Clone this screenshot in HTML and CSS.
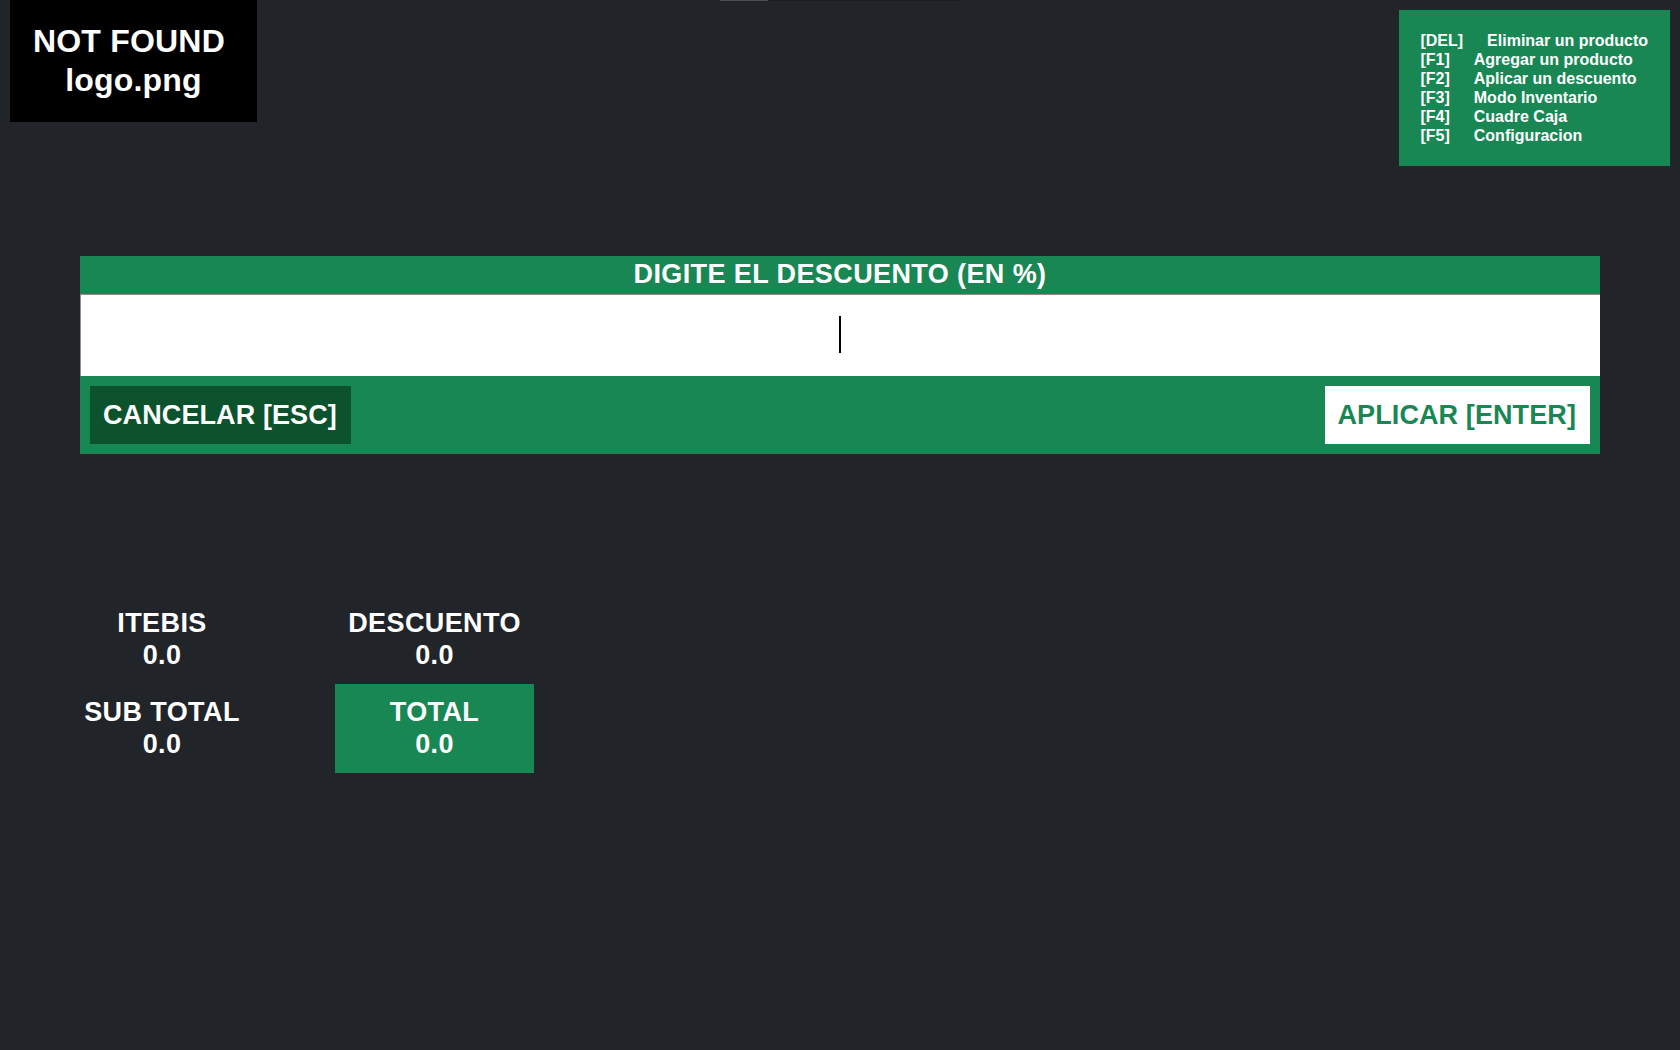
FILE: index.html
```html
<!DOCTYPE html>
<html lang="es">
<head>
<meta charset="utf-8">
<title>POS</title>
<link rel="stylesheet" href="styles.css">
</head>
<body>
<div class="topline"><span class="thumb"></span></div>
<header class="top">
  <div class="logo">NOT FOUND&nbsp;<br>logo.png</div>
  <div class="shortcuts">
    <div class="row"><span class="key">[DEL]</span><span class="desc">Eliminar un producto</span></div>
    <div class="row"><span class="key">[F1]</span><span class="desc">Agregar un producto</span></div>
    <div class="row"><span class="key">[F2]</span><span class="desc">Aplicar un descuento</span></div>
    <div class="row"><span class="key">[F3]</span><span class="desc">Modo Inventario</span></div>
    <div class="row"><span class="key">[F4]</span><span class="desc">Cuadre Caja</span></div>
    <div class="row"><span class="key">[F5]</span><span class="desc">Configuracion</span></div>
  </div>
</header>

<section class="dialog">
  <div class="dialog-title">DIGITE EL DESCUENTO (EN %)</div>
  <div class="input-wrap">
    <input class="dialog-input" type="text">
    <span class="caret"></span>
  </div>
  <div class="dialog-actions">
    <button class="btn btn-cancel">CANCELAR [ESC]</button>
    <button class="btn btn-apply">APLICAR [ENTER]</button>
  </div>
</section>

<section class="totals">
  <div class="cell"><div>ITEBIS</div><div>0.0</div></div>
  <div class="cell"><div>DESCUENTO</div><div>0.0</div></div>
  <div class="cell"><div>SUB TOTAL</div><div>0.0</div></div>
  <div class="cell cell-total"><div>TOTAL</div><div>0.0</div></div>
</section>
</body>
</html>
```

FILE: styles.css
```css
* { box-sizing: border-box; }

html, body {
  margin: 0;
  padding: 0;
  background: #212529;
  color: #fff;
  font-family: "Liberation Sans", Arial, sans-serif;
  font-weight: bold;
  height: 100%;
}

body { position: relative; }

.topline {
  position: absolute;
  top: 0;
  left: 720px;
  width: 242px;
  height: 1px;
  background: #1a1d20;
}
.topline .thumb {
  display: block;
  width: 48px;
  height: 1px;
  background: #4e4e4e;
}

.top {
  display: flex;
  justify-content: space-between;
  align-items: flex-start;
  padding: 0 10px;
}

.logo {
  width: 247px;
  background: #000;
  text-align: center;
  font-size: 32px;
  line-height: 39px;
  padding: 22px 0;
  letter-spacing: 0.2px;
}

.shortcuts {
  margin-top: 10px;
  background: #198754;
  padding: 21px 22px 21px 21px;
  font-size: 16px;
  line-height: 19px;
}
.shortcuts .row { white-space: nowrap; }
.shortcuts .desc { margin-left: 24px; }

.dialog {
  margin: 90px 80px 0;
  background: #198754;
}

.dialog-title {
  text-align: center;
  font-size: 27px;
  line-height: 36px;
  padding-bottom: 2px;
  letter-spacing: 0.4px;
}

.input-wrap { position: relative; }

.dialog-input {
  display: block;
  width: 100%;
  height: 82px;
  margin: 0;
  border: 0;
  border-top: 1px solid #8f8f8f;
  border-left: 1px solid #8f8f8f;
  background: #fff;
  color: #000;
  text-align: center;
  font-family: "Liberation Sans", Arial, sans-serif;
  font-size: 33px;
  outline: none;
  caret-color: #000;
}

.caret {
  position: absolute;
  left: calc(50% - 1px);
  top: 22px;
  width: 2px;
  height: 37px;
  background: #000;
  pointer-events: none;
}

.dialog-actions {
  display: flex;
  justify-content: space-between;
  padding: 10px;
}

.btn {
  height: 58px;
  border: 0;
  margin: 0;
  font-family: "Liberation Sans", Arial, sans-serif;
  font-weight: bold;
  font-size: 27px;
  letter-spacing: 0.1px;
  padding: 0 14px 0 13px;
}
.btn-cancel { background: #0c522d; color: #fff; }
.btn-apply { background: #fff; color: #198754; }

.totals {
  display: grid;
  grid-template-columns: 200px 199px;
  column-gap: 73px;
  row-gap: 0;
  margin: 141px 0 0 62px;
  font-size: 27px;
  line-height: 32px;
  letter-spacing: 0.4px;
  text-align: center;
}
.cell { padding: 12px 0 13px; }
.cell-total { background: #198754; }
```
